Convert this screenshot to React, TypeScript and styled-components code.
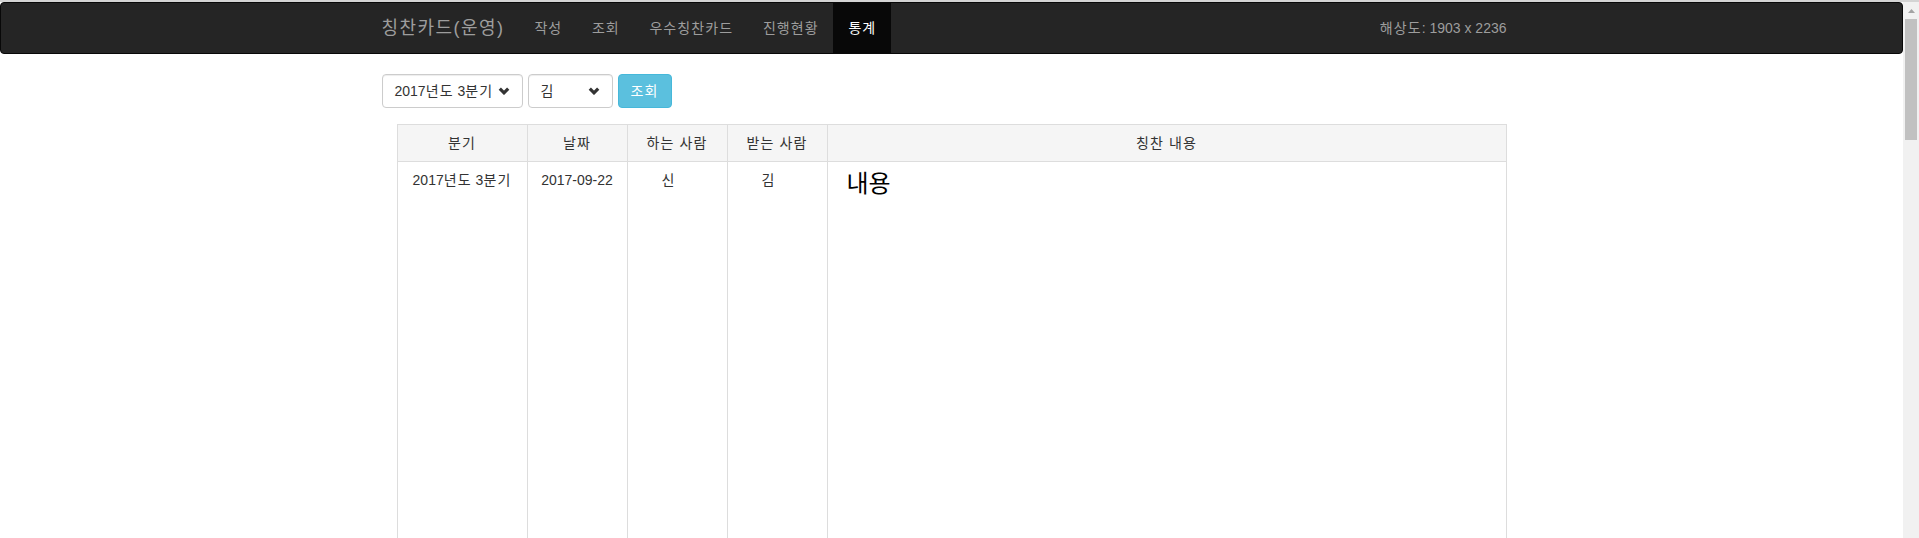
import React from 'react';
import styled, { createGlobalStyle } from 'styled-components';

const GlobalStyle = createGlobalStyle`
  html, body {
    margin: 0;
    padding: 0;
    height: 538px;
    overflow: hidden;
    background: #ffffff;
  }
  body {
    font-family: "Liberation Sans", "Noto Sans CJK KR", Arial, sans-serif;
    font-size: 14px;
    line-height: 20px;
    color: #333333;
  }
  * {
    box-sizing: border-box;
  }
`;

// hangul in Noto is a bit narrower than the reference's font, widen it
const Ko = styled.span`
  letter-spacing: 0.08em;
`;

// page + fake browser scrollbar side by side
const Window = styled.div`
  display: flex;
  height: 538px;
  border-top: 2px solid #d4d4d4;
`;

const Page = styled.div`
  flex: 1;
  min-width: 0;
  overflow: hidden;
`;

const Scrollbar = styled.div`
  width: 16px;
  flex-shrink: 0;
  background: #f1f1f1;
  display: flex;
  flex-direction: column;
  align-items: center;
`;

const ScrollArrow = styled.div`
  height: 17px;
  width: 100%;
  display: flex;
  align-items: center;
  justify-content: center;
`;

const ScrollThumb = styled.div`
  width: 12px;
  height: 121px;
  background: #c1c1c1;
`;

const Navbar = styled.nav`
  height: 52px;
  background: #252525;
  border: 1px solid #080808;
  border-radius: 4px;
  margin-bottom: 20px;
`;

const Container = styled.div`
  width: 1170px;
  margin: 0 auto;
  padding: 0 15px;
`;

const NavInner = styled(Container)`
  display: flex;
  align-items: stretch;
  height: 50px;
`;

const Brand = styled.a`
  margin-left: -15px;
  padding: 15px;
  font-size: 18px;
  line-height: 20px;
  color: #9d9d9d;
  text-decoration: none;
  white-space: nowrap;
`;

const NavList = styled.ul`
  display: flex;
  margin: 0;
  padding: 0;
  list-style: none;
`;

const NavLink = styled.a<{ $active?: boolean }>`
  display: block;
  padding: 15px 14.5px 15px 15px;
  line-height: 20px;
  color: ${(p) => (p.$active ? '#ffffff' : '#9d9d9d')};
  background: ${(p) => (p.$active ? '#080808' : 'transparent')};
  text-decoration: none;
  white-space: nowrap;
`;

const NavRight = styled.div`
  margin-left: auto;
  padding: 15px;
  color: #9d9d9d;
  line-height: 20px;
  white-space: nowrap;
`;

const FilterBar = styled.div`
  display: flex;
  gap: 5px;
  height: 34px;
`;

const FakeSelect = styled.div<{ $width: number }>`
  width: ${(p) => p.$width}px;
  height: 34px;
  display: flex;
  align-items: center;
  justify-content: space-between;
  padding: 0 12px 0 12px;
  border: 1px solid #cccccc;
  border-radius: 4px;
  background: #ffffff;
  box-shadow: inset 0 1px 1px rgba(0, 0, 0, 0.075);
  color: #333333;
  white-space: nowrap;
`;

const SearchButton = styled.button`
  height: 34px;
  padding: 6px 12px;
  border: 1px solid #46b8da;
  border-radius: 4px;
  background: #5bc0de;
  color: #ffffff;
  font-family: inherit;
  font-size: 14px;
  line-height: 20px;
`;

const TableWrap = styled.div`
  margin: 16px 15px 0;
`;

const Table = styled.table`
  width: 100%;
  border-collapse: collapse;
  table-layout: fixed;
`;

const Th = styled.th<{ $width?: number }>`
  width: ${(p) => (p.$width ? `${p.$width}px` : 'auto')};
  padding: 8px;
  border: 1px solid #dddddd;
  background: #f5f5f5;
  font-weight: normal;
  text-align: center;
  line-height: 20px;
`;

const Td = styled.td`
  height: 520px;
  padding: 8px;
  border: 1px solid #dddddd;
  border-bottom: none;
  vertical-align: top;
  text-align: center;
  line-height: 20px;
`;

const ContentTd = styled(Td)`
  text-align: left;
`;

const Content = styled.div`
  padding: 1px 11px;
  font-size: 24px;
  line-height: 26px;
  color: #000000;
`;

const Redacted = styled.span`
  visibility: hidden;
`;

const Chevron = () => (
  <svg width="12" height="8" viewBox="0 0 12 8">
    <polyline points="1.8,1.6 6,5.8 10.2,1.6" fill="none" stroke="#333" strokeWidth="3.2" />
  </svg>
);

const navItems = ['작성', '조회', '우수칭찬카드', '진행현황', '통계'];

const columns: { label: string; width?: number }[] = [
  { label: '분기', width: 130 },
  { label: '날짜', width: 100 },
  { label: '하는 사람', width: 100 },
  { label: '받는 사람', width: 100 },
  { label: '칭찬 내용' },
];

export default function App() {
  return (
    <>
      <GlobalStyle />
      <Window>
        <Page>
          <Navbar>
            <NavInner>
              <Brand>
                <Ko>칭찬카드(운영)</Ko>
              </Brand>
              <NavList>
                {navItems.map((item) => (
                  <li key={item}>
                    <NavLink $active={item === '통계'}>
                      <Ko>{item}</Ko>
                    </NavLink>
                  </li>
                ))}
              </NavList>
              <NavRight>
                <Ko>해상도</Ko>: 1903 x 2236
              </NavRight>
            </NavInner>
          </Navbar>

          <Container>
            <FilterBar>
              <FakeSelect $width={141}>
                <span>
                  2017<Ko>년도</Ko> 3<Ko>분기</Ko>
                </span>
                <Chevron />
              </FakeSelect>
              <FakeSelect $width={85}>
                <span>
                  <Ko>김</Ko>
                  <Redacted>○○</Redacted>
                </span>
                <Chevron />
              </FakeSelect>
              <SearchButton>
                <Ko>조회</Ko>
              </SearchButton>
            </FilterBar>

            <TableWrap>
              <Table>
                <thead>
                  <tr>
                    {columns.map((c) => (
                      <Th key={c.label} $width={c.width}>
                        <Ko>{c.label}</Ko>
                      </Th>
                    ))}
                  </tr>
                </thead>
                <tbody>
                  <tr>
                    <Td>
                      2017<Ko>년도</Ko> 3<Ko>분기</Ko>
                    </Td>
                    <Td>2017-09-22</Td>
                    <Td>
                      <Ko>신</Ko>
                      <Redacted>○○</Redacted>
                    </Td>
                    <Td>
                      <Ko>김</Ko>
                      <Redacted>○○</Redacted>
                    </Td>
                    <ContentTd>
                      <Content>내용</Content>
                    </ContentTd>
                  </tr>
                </tbody>
              </Table>
            </TableWrap>
          </Container>
        </Page>
        <Scrollbar>
          <ScrollArrow>
            <svg width="7" height="4" viewBox="0 0 7 4">
              <polygon points="0,4 3.5,0 7,4" fill="#a3a3a3" />
            </svg>
          </ScrollArrow>
          <ScrollThumb />
        </Scrollbar>
      </Window>
    </>
  );
}
